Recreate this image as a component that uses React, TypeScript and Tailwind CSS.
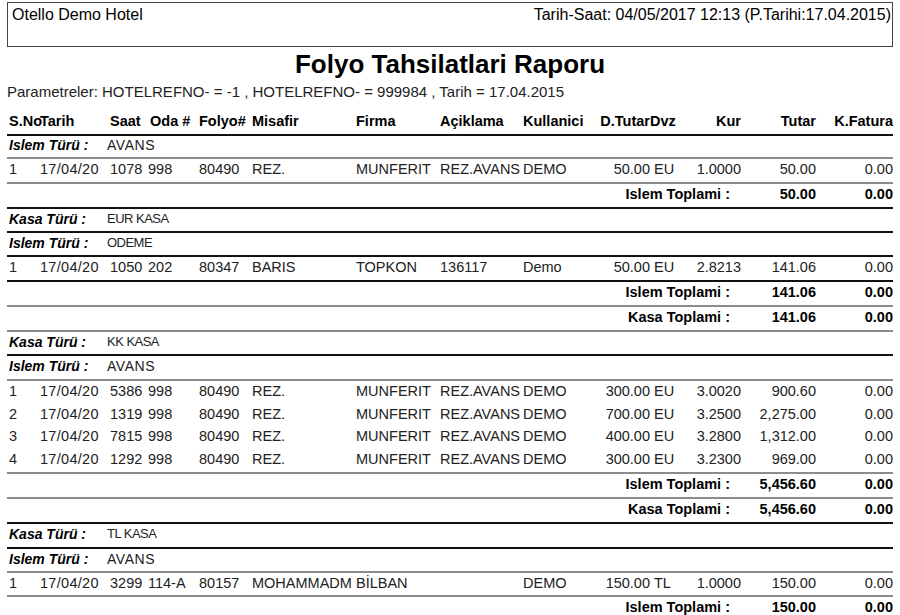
const font = { fontFamily: '"Liberation Sans", Arial, sans-serif' }

type Row = {
  sno: string
  tarih: string
  saat: string
  oda: string
  folyo: string
  misafir: string
  firma: string
  aciklama: string
  kullanici: string
  dtutar: string
  dvz: string
  kur: string
  tutar: string
  fatura: string
}

type Band =
  | { kind: 'kasa'; value: string; h: string; thick: boolean }
  | { kind: 'islem'; value: string; h: string; thick: boolean; small?: boolean }
  | { kind: 'rows'; rows: Row[]; h: string; thick: boolean }
  | { kind: 'total'; label: string; tutar: string; fatura: string; h: string; thick: boolean }

const avans = (sno: string, saat: string, dtutar: string, kur: string, tutar: string): Row => ({
  sno,
  tarih: '17/04/20',
  saat,
  oda: '998',
  folyo: '80490',
  misafir: 'REZ.',
  firma: 'MUNFERIT',
  aciklama: 'REZ.AVANS',
  kullanici: 'DEMO',
  dtutar,
  dvz: 'EU',
  kur,
  tutar,
  fatura: '0.00',
})

const bands: Band[] = [
  { kind: 'islem', value: 'AVANS', h: 'h-[23px]', thick: false },
  { kind: 'rows', rows: [avans('1', '1078', '50.00', '1.0000', '50.00')], h: 'h-[25px]', thick: false },
  { kind: 'total', label: 'Islem Toplami :', tutar: '50.00', fatura: '0.00', h: 'h-[25px]', thick: true },
  { kind: 'kasa', value: 'EUR KASA', h: 'h-[24px]', thick: true },
  { kind: 'islem', value: 'ODEME', h: 'h-[24px]', thick: true, small: true },
  {
    kind: 'rows',
    rows: [
      {
        sno: '1',
        tarih: '17/04/20',
        saat: '1050',
        oda: '202',
        folyo: '80347',
        misafir: 'BARIS',
        firma: 'TOPKON',
        aciklama: '136117',
        kullanici: 'Demo',
        dtutar: '50.00',
        dvz: 'EU',
        kur: '2.8213',
        tutar: '141.06',
        fatura: '0.00',
      },
    ],
    h: 'h-[25px]',
    thick: true,
  },
  { kind: 'total', label: 'Islem Toplami :', tutar: '141.06', fatura: '0.00', h: 'h-[25px]', thick: false },
  { kind: 'total', label: 'Kasa Toplami :', tutar: '141.06', fatura: '0.00', h: 'h-[25px]', thick: false },
  { kind: 'kasa', value: 'KK KASA', h: 'h-[24px]', thick: true },
  { kind: 'islem', value: 'AVANS', h: 'h-[25px]', thick: false },
  {
    kind: 'rows',
    rows: [
      avans('1', '5386', '300.00', '3.0020', '900.60'),
      avans('2', '1319', '700.00', '3.2500', '2,275.00'),
      avans('3', '7815', '400.00', '3.2800', '1,312.00'),
      avans('4', '1292', '300.00', '3.2300', '969.00'),
    ],
    h: 'h-[93px]',
    thick: false,
  },
  { kind: 'total', label: 'Islem Toplami :', tutar: '5,456.60', fatura: '0.00', h: 'h-[25px]', thick: false },
  { kind: 'total', label: 'Kasa Toplami :', tutar: '5,456.60', fatura: '0.00', h: 'h-[25px]', thick: true },
  { kind: 'kasa', value: 'TL KASA', h: 'h-[25px]', thick: true },
  { kind: 'islem', value: 'AVANS', h: 'h-[24px]', thick: false },
  {
    kind: 'rows',
    rows: [
      {
        sno: '1',
        tarih: '17/04/20',
        saat: '3299',
        oda: '114-A',
        folyo: '80157',
        misafir: 'MOHAMMADM',
        firma: 'BİLBAN',
        aciklama: '',
        kullanici: 'DEMO',
        dtutar: '150.00',
        dvz: 'TL',
        kur: '1.0000',
        tutar: '150.00',
        fatura: '0.00',
      },
    ],
    h: 'h-[24px]',
    thick: false,
  },
  { kind: 'total', label: 'Islem Toplami :', tutar: '150.00', fatura: '0.00', h: 'h-[25px]', thick: false },
]

function DataRow({ r, h }: { r: Row; h: string }) {
  return (
    <div className={`flex items-center pb-[3px] text-[#222] whitespace-nowrap ${h}`}>
      <span className="w-[33px] pl-[2px]">{r.sno}</span>
      <span className="w-[70px] tracking-[0.02em]">{r.tarih}</span>
      <span className="w-[38px]">{r.saat}</span>
      <span className="w-[51px]">{r.oda}</span>
      <span className="w-[53px]">{r.folyo}</span>
      <span className="w-[104px] overflow-hidden">{r.misafir}</span>
      <span className="w-[84px]">{r.firma}</span>
      <span className="w-[83px]">{r.aciklama}</span>
      <span className="w-[72px]">{r.kullanici}</span>
      <span className="w-[55px] text-right">{r.dtutar}</span>
      <span className="w-[40px] pl-[4px]">{r.dvz}</span>
      <span className="w-[51px] text-right">{r.kur}</span>
      <span className="w-[75px] text-right">{r.tutar}</span>
      <span className="w-[77px] text-right">{r.fatura}</span>
    </div>
  )
}

function BandView({ band }: { band: Band }) {
  const line = band.thick ? 'border-b-2 border-[#111]' : 'border-b-2 border-[#8c8c8c]'

  if (band.kind === 'rows') {
    return (
      <div className={`flex flex-col ${band.h} ${line}`}>
        {band.rows.map((r, i) => (
          <DataRow key={i} r={r} h={band.rows.length > 1 ? 'h-[23px]' : 'flex-1'} />
        ))}
      </div>
    )
  }

  if (band.kind === 'total') {
    return (
      <div className={`flex items-center pb-[3px] font-bold text-black ${band.h} ${line}`}>
        <span className="flex-1 text-right pr-[11px]">{band.label}</span>
        <span className="w-[75px] text-right">{band.tutar}</span>
        <span className="w-[77px] text-right">{band.fatura}</span>
      </div>
    )
  }

  const label = band.kind === 'kasa' ? 'Kasa Türü :' : 'Islem Türü :'
  const small = band.kind === 'kasa' || (band.kind === 'islem' && band.small)

  return (
    <div className={`flex items-center pb-[3px] ${band.h} ${line}`}>
      <span className="w-[100px] pl-[2px] font-bold italic text-[14px] text-black">{label}</span>
      <span
        className={
          small
            ? 'text-[13px] tracking-[-0.04em] text-[#222]'
            : 'text-[14px] tracking-[0.04em] text-[#222]'
        }
      >
        {band.value}
      </span>
    </div>
  )
}

export default function App() {
  return (
    <main className="w-[900px] h-[615px] overflow-hidden bg-white pt-[2px]" style={font}>
      <div className="mx-[7px] h-[45px] border border-[#444] pl-[4px] pr-[1px] pt-[2px] flex justify-between items-start text-[16px] text-black leading-[20px]">
        <span>Otello Demo Hotel</span>
        <span>Tarih-Saat: 04/05/2017 12:13 (P.Tarihi:17.04.2015)</span>
      </div>

      <h1 className="mt-[4px] text-center text-[26px] font-bold leading-[26px] text-black">
        Folyo Tahsilatlari Raporu
      </h1>

      <p className="mt-[7px] ml-[7px] text-[15px] leading-[16px] text-[#222]">
        Parametreler: HOTELREFNO- = -1 , HOTELREFNO- = 999984 , Tarih = 17.04.2015
      </p>

      <section className="mt-[11px] mx-[7px] text-[14.5px] leading-[16px]">
        <div className="flex items-center h-[25px] pb-[3px] border-b-2 border-[#111] font-bold text-black whitespace-nowrap">
          <span className="w-[33px] pl-[2px]">S.No</span>
          <span className="w-[70px]">Tarih</span>
          <span className="w-[38px]">Saat</span>
          <span className="w-[51px] pl-[2px]">Oda #</span>
          <span className="w-[53px]">Folyo#</span>
          <span className="w-[104px]">Misafir</span>
          <span className="w-[84px]">Firma</span>
          <span className="w-[83px]">Açiklama</span>
          <span className="w-[72px]">Kullanici</span>
          <span className="w-[55px] text-right">D.Tutar</span>
          <span className="w-[40px]">Dvz</span>
          <span className="w-[51px] text-right">Kur</span>
          <span className="w-[75px] text-right">Tutar</span>
          <span className="w-[77px] text-right">K.Fatura</span>
        </div>

        {bands.map((b, i) => (
          <BandView key={i} band={b} />
        ))}
      </section>
    </main>
  )
}
